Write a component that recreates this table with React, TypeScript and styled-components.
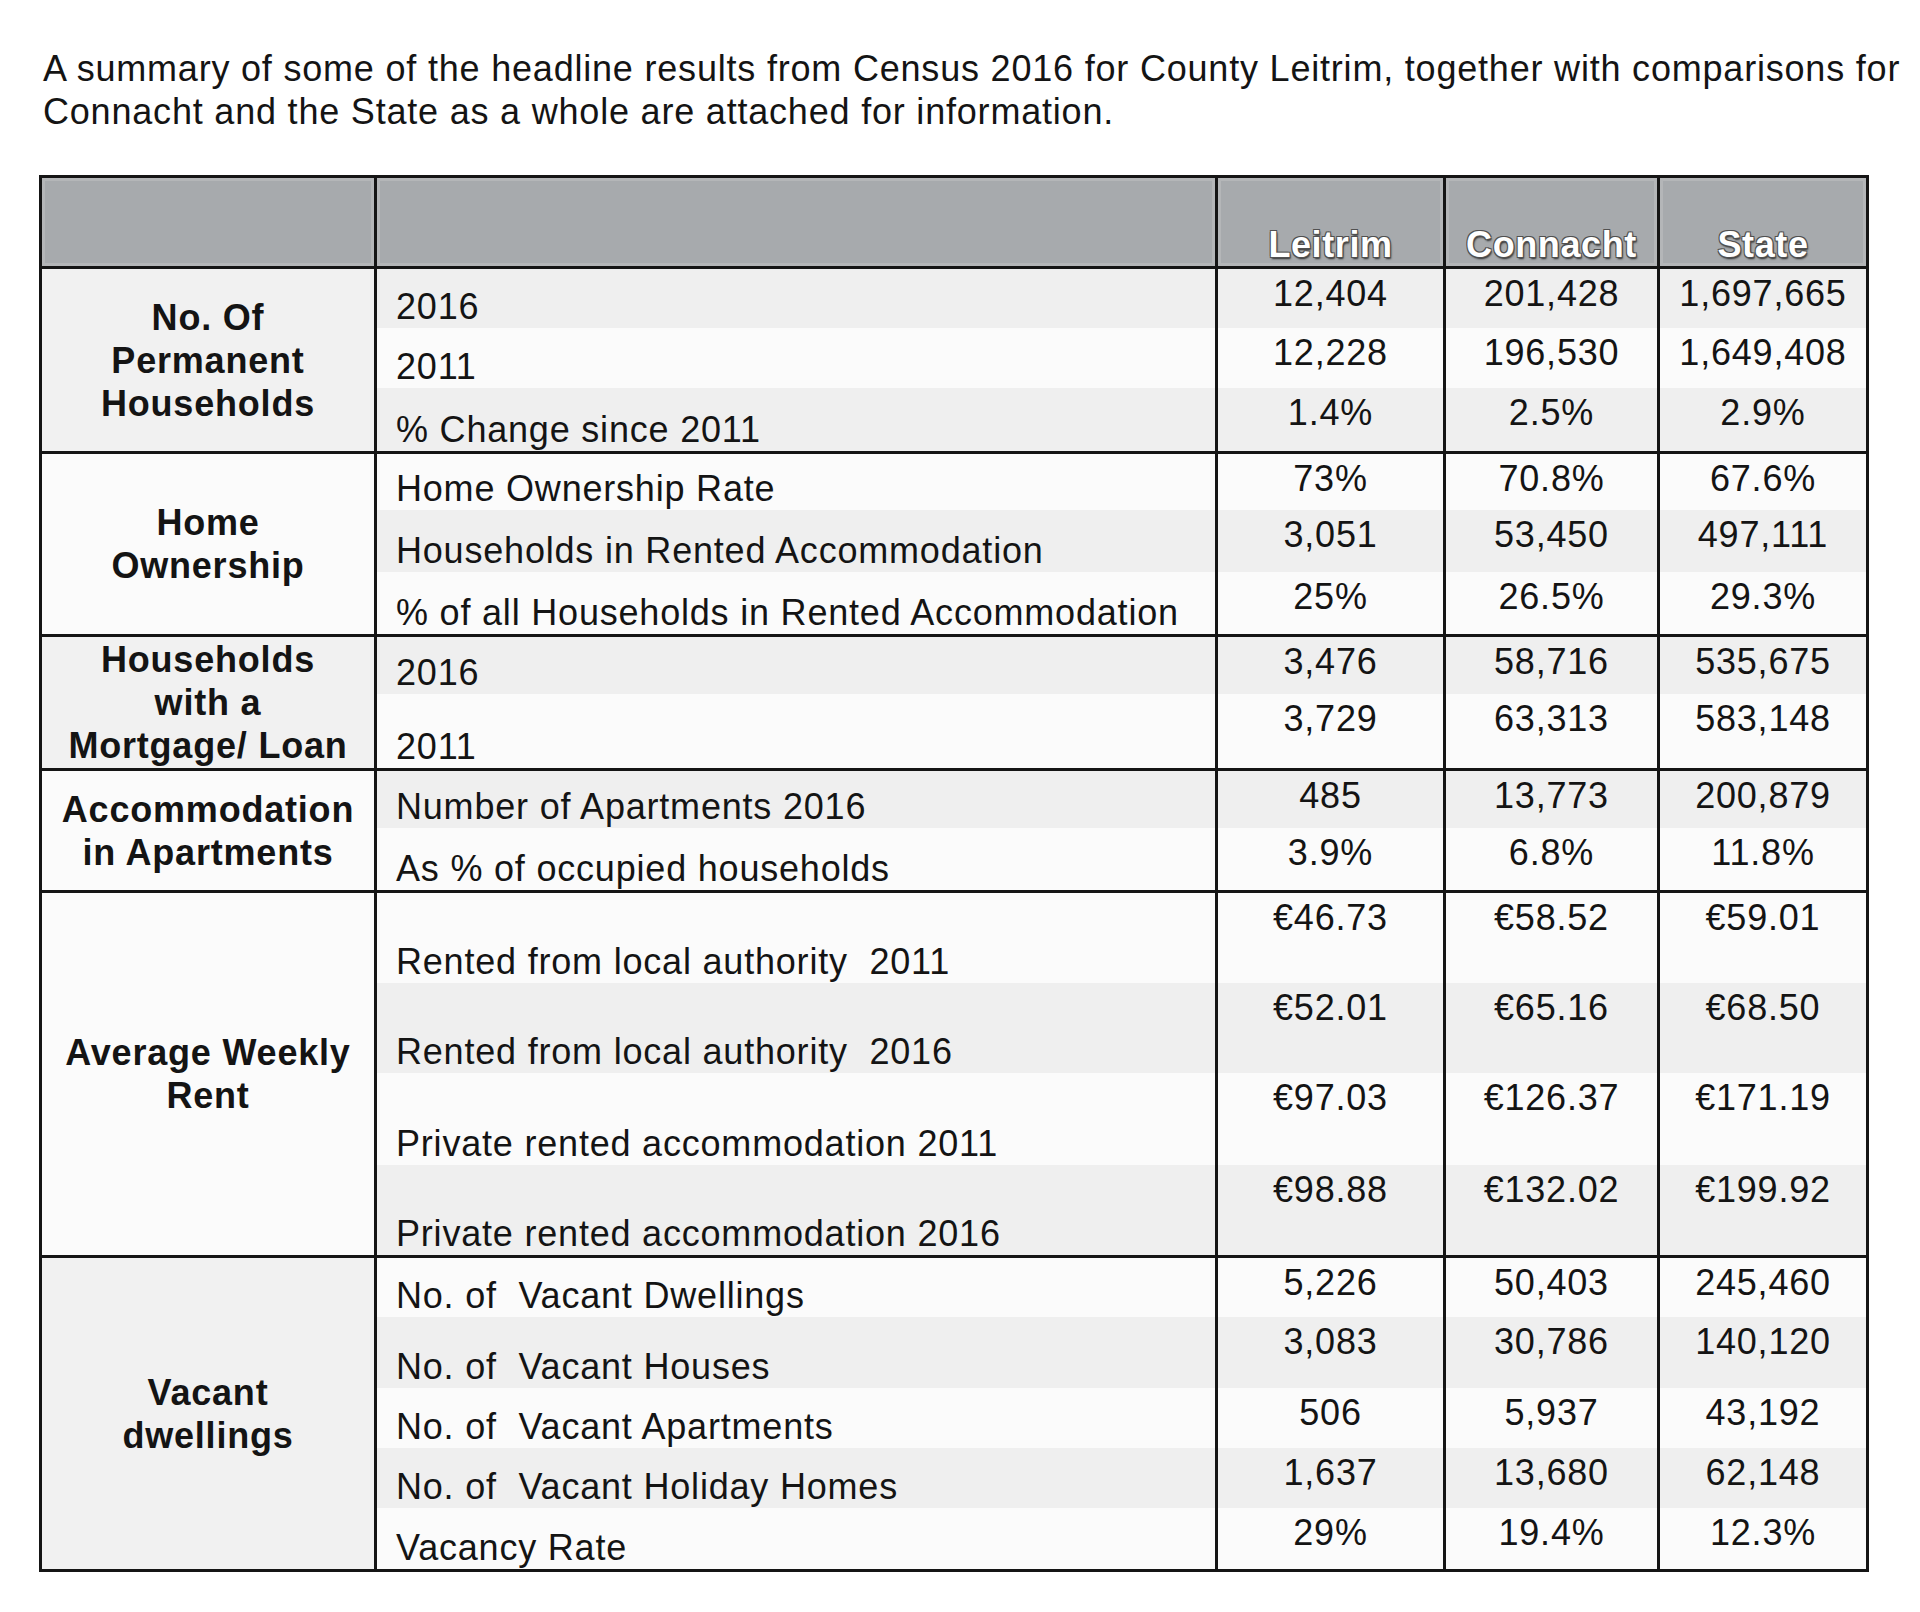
import React from 'react';
import styled, { createGlobalStyle } from 'styled-components';

const GlobalStyle = createGlobalStyle`
	html, body {
		margin: 0;
		padding: 0;
		background: #ffffff;
	}
	body {
		font-family: 'Liberation Sans', Arial, Helvetica, sans-serif;
		color: #141414;
		letter-spacing: 0.8px;
	}
`;

const INK = '#151515';

// Page wrapper
const Page = styled.div`
	width: 1920px;
	min-height: 1612px;
	padding: 47px 0 0 39px;
	box-sizing: border-box;
`;

const Intro = styled.p`
	margin: 0 0 42px 4px;
	font-size: 36px;
	line-height: 43px;
	white-space: nowrap;
`;

// Table
const Table = styled.table`
	border-collapse: separate;
	border-spacing: 0;
	table-layout: fixed;
	width: 1830px;
	border: 3px solid ${INK};
	font-size: 36px;
	line-height: 42px;
`;

const Col = styled.col<{ $w: number }>`
	width: ${(p) => p.$w}px;
`;

const Row = styled.tr<{ $h: number }>`
	height: ${(p) => p.$h}px;
`;

const HeadCell = styled.th<{ $first?: boolean }>`
	box-sizing: border-box;
	height: 88px;
	padding: 0;
	background: #a7aaad;
	box-shadow: inset 0 0 0 3px #b4b6b8;
	border-left: ${(p) => (p.$first ? 'none' : `3px solid ${INK}`)};
	vertical-align: bottom;
	text-align: center;
	color: #ffffff;
	font-weight: bold;
	letter-spacing: 0.6px;
	text-shadow:
		-1px -1px 0 #505050,
		1px -1px 0 #505050,
		-1px 1px 0 #505050,
		1px 1px 0 #505050,
		1px 2px 2px #2a2a2a;
`;

const GroupCell = styled.td<{ $shade: boolean }>`
	box-sizing: border-box;
	padding: 0 2px;
	border-top: 3px solid ${INK};
	background: ${(p) => (p.$shade ? '#f1f1f1' : '#fbfbfb')};
	text-align: center;
	vertical-align: middle;
	font-weight: bold;
	line-height: 43px;
`;

const LabelCell = styled.td<{ $shade: boolean; $top: boolean }>`
	box-sizing: border-box;
	padding: 0 0 0 19px;
	border-left: 3px solid ${INK};
	border-top: ${(p) => (p.$top ? `3px solid ${INK}` : 'none')};
	background: ${(p) => (p.$shade ? '#efefef' : '#fbfbfb')};
	vertical-align: bottom;
	white-space: pre;
`;

const ValueCell = styled.td<{ $shade: boolean; $top: boolean }>`
	box-sizing: border-box;
	padding: 4px 0 0;
	border-left: 3px solid ${INK};
	border-top: ${(p) => (p.$top ? `3px solid ${INK}` : 'none')};
	background: ${(p) => (p.$shade ? '#efefef' : '#fbfbfb')};
	vertical-align: top;
	text-align: center;
`;

type DataRow = { label: string; values: [string, string, string]; h: number; shade: boolean };
type Section = { title: string[]; shade: boolean; rows: DataRow[] };

const sections: Section[] = [
	{
		title: ['No. Of', 'Permanent', 'Households'],
		shade: true,
		rows: [
			{ label: '2016', values: ['12,404', '201,428', '1,697,665'], h: 62, shade: true },
			{ label: '2011', values: ['12,228', '196,530', '1,649,408'], h: 60, shade: false },
			{ label: '% Change since 2011', values: ['1.4%', '2.5%', '2.9%'], h: 63, shade: true },
		],
	},
	{
		title: ['Home', 'Ownership'],
		shade: false,
		rows: [
			{ label: 'Home Ownership Rate', values: ['73%', '70.8%', '67.6%'], h: 59, shade: false },
			{ label: 'Households in Rented Accommodation', values: ['3,051', '53,450', '497,111'], h: 62, shade: true },
			{ label: '% of all Households in Rented Accommodation', values: ['25%', '26.5%', '29.3%'], h: 62, shade: false },
		],
	},
	{
		title: ['Households', 'with a', 'Mortgage/ Loan'],
		shade: true,
		rows: [
			{ label: '2016', values: ['3,476', '58,716', '535,675'], h: 60, shade: true },
			{ label: '2011', values: ['3,729', '63,313', '583,148'], h: 74, shade: false },
		],
	},
	{
		title: ['Accommodation', 'in Apartments'],
		shade: false,
		rows: [
			{ label: 'Number of Apartments 2016', values: ['485', '13,773', '200,879'], h: 60, shade: true },
			{ label: 'As % of occupied households', values: ['3.9%', '6.8%', '11.8%'], h: 62, shade: false },
		],
	},
	{
		title: ['Average Weekly', 'Rent'],
		shade: false,
		rows: [
			{ label: 'Rented from local authority  2011', values: ['€46.73', '€58.52', '€59.01'], h: 93, shade: false },
			{ label: 'Rented from local authority  2016', values: ['€52.01', '€65.16', '€68.50'], h: 90, shade: true },
			{ label: 'Private rented accommodation 2011', values: ['€97.03', '€126.37', '€171.19'], h: 92, shade: false },
			{ label: 'Private rented accommodation 2016', values: ['€98.88', '€132.02', '€199.92'], h: 90, shade: true },
		],
	},
	{
		title: ['Vacant', 'dwellings'],
		shade: true,
		rows: [
			{ label: 'No. of  Vacant Dwellings', values: ['5,226', '50,403', '245,460'], h: 62, shade: false },
			{ label: 'No. of  Vacant Houses', values: ['3,083', '30,786', '140,120'], h: 71, shade: true },
			{ label: 'No. of  Vacant Apartments', values: ['506', '5,937', '43,192'], h: 60, shade: false },
			{ label: 'No. of  Vacant Holiday Homes', values: ['1,637', '13,680', '62,148'], h: 60, shade: true },
			{ label: 'Vacancy Rate', values: ['29%', '19.4%', '12.3%'], h: 61, shade: false },
		],
	},
];

export default function App() {
	return (
		<Page>
			<GlobalStyle />
			<Intro>
				A summary of some of the headline results from Census 2016 for County Leitrim, together with comparisons for
				<br />
				Connacht and the State as a whole are attached for information.
			</Intro>
			<Table>
				<colgroup>
					<Col $w={332} />
					<Col $w={841} />
					<Col $w={228} />
					<Col $w={214} />
					<Col $w={209} />
				</colgroup>
				<thead>
					<tr>
						<HeadCell $first />
						<HeadCell />
						<HeadCell>Leitrim</HeadCell>
						<HeadCell>Connacht</HeadCell>
						<HeadCell>State</HeadCell>
					</tr>
				</thead>
				<tbody>
					{sections.map((s) =>
						s.rows.map((r, i) => (
							<Row key={s.title.join() + r.label} $h={r.h}>
								{i === 0 && (
									<GroupCell rowSpan={s.rows.length} $shade={s.shade}>
										{s.title.map((t, k) => (
											<React.Fragment key={t}>
												{k > 0 && <br />}
												{t}
											</React.Fragment>
										))}
									</GroupCell>
								)}
								<LabelCell $shade={r.shade} $top={i === 0}>
									{r.label}
								</LabelCell>
								{r.values.map((v, k) => (
									<ValueCell key={k} $shade={r.shade} $top={i === 0}>
										{v}
									</ValueCell>
								))}
							</Row>
						))
					)}
				</tbody>
			</Table>
		</Page>
	);
}
